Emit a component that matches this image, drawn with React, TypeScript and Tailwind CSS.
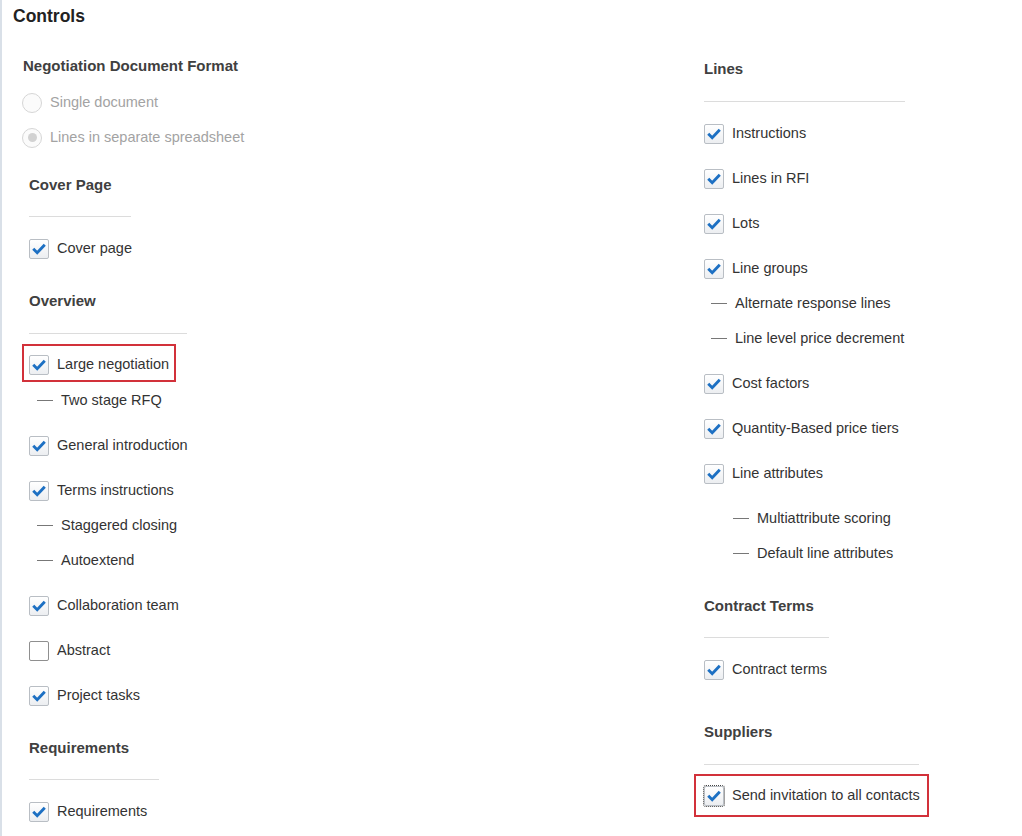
import React from "react";

const font = { fontFamily: '"Liberation Sans", Arial, sans-serif' };

const CheckBox = ({ checked = true, focused = false }: { checked?: boolean; focused?: boolean }) => (
  <span
    className={`flex h-[20px] w-[20px] shrink-0 items-center justify-center rounded-[2px] border bg-gradient-to-b from-white to-[#eceef1] ${
      checked ? "border-[#b9bec4]" : "border-[#8f8f8f] bg-white from-white to-white"
    } ${focused ? "outline-1 outline-dotted outline-[#444] outline-offset-0" : ""}`}
  >
    {checked && (
      <svg viewBox="0 0 20 20" className="h-[20px] w-[20px]">
        <path
          d="M3.6 9.8 L8 14.2 L16.4 5.2"
          fill="none"
          stroke="#1d70c3"
          strokeWidth="3.2"
          strokeLinecap="butt"
          strokeLinejoin="miter"
        />
      </svg>
    )}
  </span>
);

const Radio = ({ checked = false }: { checked?: boolean }) => (
  <span className="flex h-[20px] w-[20px] shrink-0 items-center justify-center rounded-full border border-[#d6d6d6] bg-[#fbfbfb]">
    {checked && <span className="h-[9px] w-[9px] rounded-full bg-[#d2d2d2]" />}
  </span>
);

const CheckRow = ({
  label,
  checked = true,
  first = false,
}: {
  label: string;
  checked?: boolean;
  first?: boolean;
}) => (
  <div className={`flex h-[35px] items-center gap-[8px] ${first ? "mt-[14px]" : "mt-[10px]"}`}>
    <CheckBox checked={checked} />
    <span className="text-[14.5px] text-[#333]">{label}</span>
  </div>
);

const DashRow = ({ label, indent = "pl-[8px]", extra = "" }: { label: string; indent?: string; extra?: string }) => (
  <div className={`flex h-[35px] items-center gap-[8px] ${indent} ${extra}`}>
    <span className="h-px w-[16px] bg-[#777]" />
    <span className="text-[14.5px] text-[#333]">{label}</span>
  </div>
);

const Heading = ({ text, mt }: { text: string; mt: string }) => (
  <h3 className={`h-[20px] text-[15px] font-bold leading-[20px] text-[#404040] ${mt}`}>{text}</h3>
);

const Divider = ({ w, mt = "mt-[21px]" }: { w: string; mt?: string }) => (
  <div className={`h-px bg-[#dcdcdc] ${w} ${mt}`} />
);

export default function App() {
  return (
    <div style={font} className="min-h-screen border-l-2 border-[#d9e0e8] bg-white">
      <h2 className="h-[26px] pl-[11px] pt-[6px] text-[17.5px] font-bold leading-[20px] text-[#222]">
        Controls
      </h2>

      <div className="grid grid-cols-[682px_1fr] pl-[20px]">
        {/* left column */}
        <div className="flex flex-col pt-[30px]">
          <h3 className="h-[20px] pl-[1px] text-[15px] font-bold leading-[20px] text-[#404040]">
            Negotiation Document Format
          </h3>
          <div className="mt-[9px] flex h-[35px] items-center gap-[8px]">
            <Radio />
            <span className="text-[14.5px] text-[#a3a3a3]">Single document</span>
          </div>
          <div className="flex h-[35px] items-center gap-[8px]">
            <Radio checked />
            <span className="text-[14.5px] text-[#a3a3a3]">Lines in separate spreadsheet</span>
          </div>

          <div className="flex flex-col pl-[7px]">
            <Heading text="Cover Page" mt="mt-[20px]" />
            <Divider w="w-[102px]" />
            <CheckRow label="Cover page" first />

            <Heading text="Overview" mt="mt-[25px]" />
            <Divider w="w-[158px]" mt="mt-[22px]" />
            <div className="mt-[14px] flex h-[35px] items-center">
              <div className="-ml-[7px] mb-[6px] flex h-[38px] items-center gap-[8px] border-2 border-[#d2313a] pl-[5px] pr-[5px] pt-[5px]">
                <CheckBox />
                <span className="text-[14.5px] text-[#333]">Large negotiation</span>
              </div>
            </div>
            <DashRow label="Two stage RFQ" />
            <CheckRow label="General introduction" />
            <CheckRow label="Terms instructions" />
            <DashRow label="Staggered closing" />
            <DashRow label="Autoextend" />
            <CheckRow label="Collaboration team" />
            <CheckRow label="Abstract" checked={false} />
            <CheckRow label="Project tasks" />

            <Heading text="Requirements" mt="mt-[25px]" />
            <Divider w="w-[130px]" />
            <CheckRow label="Requirements" first />
          </div>
        </div>

        {/* right column */}
        <div className="flex flex-col pt-[33px]">
          <Heading text="Lines" mt="mt-0" />
          <Divider w="w-[201px]" mt="mt-[22px]" />
          <CheckRow label="Instructions" first />
          <CheckRow label="Lines in RFI" />
          <CheckRow label="Lots" />
          <CheckRow label="Line groups" />
          <DashRow label="Alternate response lines" indent="pl-[7px]" />
          <DashRow label="Line level price decrement" indent="pl-[7px]" />
          <CheckRow label="Cost factors" />
          <CheckRow label="Quantity-Based price tiers" />
          <CheckRow label="Line attributes" />
          <DashRow label="Multiattribute scoring" indent="pl-[29px]" extra="mt-[10px]" />
          <DashRow label="Default line attributes" indent="pl-[29px]" />

          <Heading text="Contract Terms" mt="mt-[25px]" />
          <Divider w="w-[125px]" />
          <CheckRow label="Contract terms" first />

          <Heading text="Suppliers" mt="mt-[35px]" />
          <Divider w="w-[215px]" mt="mt-[22px]" />
          <div className="mt-[14px] flex h-[35px] items-center">
            <div className="-ml-[10px] mb-[2px] flex h-[43px] w-[235px] items-center gap-[8px] border-2 border-[#d2313a] pl-[8px]">
              <CheckBox focused />
              <span className="text-[14.5px] text-[#333]">Send invitation to all contacts</span>
            </div>
          </div>
        </div>
      </div>
    </div>
  );
}
